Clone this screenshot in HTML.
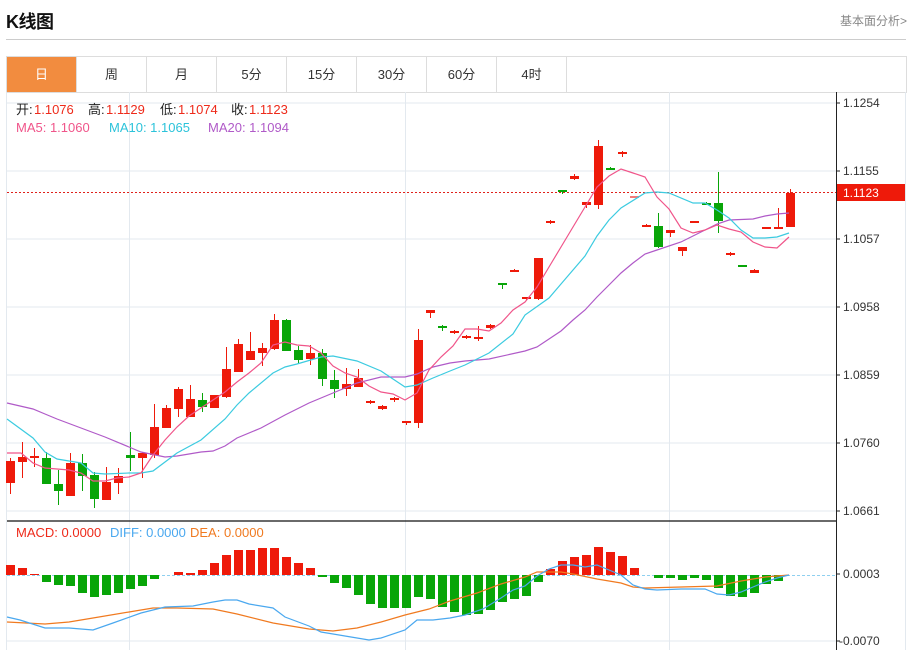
<!DOCTYPE html>
<html><head><meta charset="utf-8">
<style>
html,body{margin:0;padding:0;background:#fff;width:911px;height:650px;overflow:hidden;font-family:"Liberation Sans","Noto Sans CJK SC",sans-serif;}
.title{position:absolute;left:6px;top:8px;font-size:18px;font-weight:bold;color:#111;letter-spacing:-0.5px}
.more{position:absolute;right:4px;top:12px;font-size:12px;color:#888}
.sep{position:absolute;left:6px;top:39px;width:900px;height:1px;background:#ccc}
.tabs{position:absolute;left:6px;top:56px;width:899px;height:35px;border:1px solid #ddd;display:flex}
.tab{width:69px;height:35px;border-right:1px solid #ddd;text-align:center;line-height:35px;font-size:13px;color:#333}
.tab.on{background:#f28c3f;color:#fff}
svg{position:absolute;left:0;top:0}
</style></head><body>
<div class="title">K线图</div>
<div class="more">基本面分析&gt;</div>
<div class="sep"></div>
<div class="tabs"><div class="tab on">日</div><div class="tab">周</div><div class="tab">月</div><div class="tab">5分</div><div class="tab">15分</div><div class="tab">30分</div><div class="tab">60分</div><div class="tab">4时</div></div>
<svg id="s" width="911" height="650" xmlns="http://www.w3.org/2000/svg" font-family="Liberation Sans, Noto Sans CJK SC, sans-serif">
<g stroke="#e3e9ef" stroke-width="1">
<line x1="7" y1="103" x2="836" y2="103"/><line x1="7" y1="171" x2="836" y2="171"/><line x1="7" y1="239" x2="836" y2="239"/><line x1="7" y1="307" x2="836" y2="307"/><line x1="7" y1="375" x2="836" y2="375"/><line x1="7" y1="443" x2="836" y2="443"/><line x1="7" y1="511" x2="836" y2="511"/><line x1="7" y1="641" x2="836" y2="641"/>
<line x1="129.5" y1="92" x2="129.5" y2="650"/><line x1="405.5" y1="92" x2="405.5" y2="650"/><line x1="669.5" y1="92" x2="669.5" y2="650"/>
<line x1="6.5" y1="92" x2="6.5" y2="650"/><line x1="905.5" y1="92" x2="905.5" y2="650"/>
</g>
<line x1="7" y1="521" x2="836" y2="521" stroke="#111" stroke-width="1.2"/>
<line x1="836.5" y1="92" x2="836.5" y2="650" stroke="#222" stroke-width="1"/>
<g stroke="#222"><line x1="836" y1="103" x2="840" y2="103"/><line x1="836" y1="171" x2="840" y2="171"/><line x1="836" y1="239" x2="840" y2="239"/><line x1="836" y1="307" x2="840" y2="307"/><line x1="836" y1="375" x2="840" y2="375"/><line x1="836" y1="443" x2="840" y2="443"/><line x1="836" y1="511" x2="840" y2="511"/><line x1="836" y1="574" x2="840" y2="574"/><line x1="836" y1="641" x2="840" y2="641"/></g>
<g font-size="12" fill="#333">
<text x="843" y="107">1.1254</text><text x="843" y="175">1.1155</text><text x="843" y="243">1.1057</text><text x="843" y="311">1.0958</text><text x="843" y="379">1.0859</text><text x="843" y="447">1.0760</text><text x="843" y="515">1.0661</text><text x="843" y="578">0.0003</text><text x="839" y="645">-0.0070</text>
</g>
<line x1="7" y1="192.5" x2="836" y2="192.5" stroke="#e0201a" stroke-dasharray="2,2"/>
<line x1="7" y1="575.5" x2="836" y2="575.5" stroke="#8fd0f0" stroke-dasharray="3,2"/>
<rect x="837" y="184" width="68" height="17" fill="#ee1a0a"/>
<text x="843" y="197" font-size="12" fill="#fff">1.1123</text>
<g font-size="13">
<text x="16" y="114" fill="#222">开:</text><text x="34" y="114" fill="#ee2a1a">1.1076</text>
<text x="88" y="114" fill="#222">高:</text><text x="106" y="114" fill="#ee2a1a">1.1129</text>
<text x="160" y="114" fill="#222">低:</text><text x="178" y="114" fill="#ee2a1a">1.1074</text>
<text x="231" y="114" fill="#222">收:</text><text x="249" y="114" fill="#ee2a1a">1.1123</text>
<text x="16" y="132" fill="#f0558a">MA5: 1.1060</text>
<text x="109" y="132" fill="#2cc3da">MA10: 1.1065</text>
<text x="208" y="132" fill="#b05ac8">MA20: 1.1094</text>
<text x="16" y="537" fill="#ee2a1a">MACD: 0.0000</text>
<text x="110" y="537" fill="#4aa8ef">DIFF: 0.0000</text>
<text x="190" y="537" fill="#f07a20">DEA: 0.0000</text>
</g>
<g id="bars"></g><g id="cand"></g><g id="lines"></g>
</svg>
<script>
var R="#ee1a0a",G="#08a508";
var c=[[461,483,458,494,R],[457,462,442,478,R],[456,458,448,467,R],[458,484,452,484,G],[484,491,470,505,G],[463,496,453,496,R],[463,476,454,491,G],[475,499,472,508,G],[482,500,467,500,R],[476,483,468,494,R],[455,458,432,471,G],[453,458,452,478,R],[427,455,404,458,R],[408,428,405,428,R],[389,409,387,417,R],[399,417,385,417,R],[400,407,393,412,G],[395,408,395,408,R],[369,397,347,398,R],[344,372,339,372,R],[351,360,332,360,R],[348,353,343,366,R],[320,349,314,350,R],[320,351,319,351,G],[350,360,346,363,G],[353,359,345,365,R],[353,379,349,386,G],[380,389,370,398,G],[384,389,368,396,R],[378,387,369,387,R],[401,403,400,404,R],[406,409,405,410,R],[398,400,397,402,R],[421,423,421,425,R],[340,423,329,428,R],[310,313,310,318,R],[326,328,325,331,G],[331,333,330,334,R],[336,338,335,339,R],[337,339,326,341,R],[325,328,324,329,R],[283,284,283,289,G],[270,272,269,272,R],[297,299,297,300,R],[258,299,258,300,R],[221,223,220,224,R],[190,191,190,194,G],[176,179,174,180,R],[202,205,202,208,R],[146,205,140,209,R],[168,169,167,170,G],[152,154,151,157,R],[196,197,196,197,"#f37a7a"],[225,227,224,227,R],[226,247,213,248,G],[230,233,230,237,R],[247,251,247,256,R],[221,223,221,223,R],[203,204,202,205,G],[203,221,172,233,G],[253,255,252,256,R],[265,266,265,266,G],[270,273,269,273,R],[227,229,227,229,R],[227,229,208,229,R],[193,227,189,227,R]];
var h="";
c.forEach(function(d,i){var x=10+i*12;h+='<line x1="'+(x+.5)+'" y1="'+d[2]+'" x2="'+(x+.5)+'" y2="'+d[3]+'" stroke="'+d[4]+'" stroke-width="1"/>';h+='<rect x="'+(x-4)+'" y="'+d[0]+'" width="9" height="'+Math.max(2,d[1]-d[0])+'" fill="'+d[4]+'"/>';});
document.getElementById("cand").innerHTML=h;
var m=[565,568,574,582,585,586,593,597,595,593,589,586,579,575,572,573,570,563,555,550,550,548,548,557,563,568,577,583,588,595,604,608,608,608,597,599,607,612,615,614,610,602,599,596,582,569,561,557,555,547,552,556,568,575,578,578,580,578,580,588,596,597,593,584,581,575];
h="";m.forEach(function(v,i){var x=10+i*12;if(v<575)h+='<rect x="'+(x-4)+'" y="'+v+'" width="9" height="'+(575-v)+'" fill="'+R+'"/>';else if(v>575)h+='<rect x="'+(x-4)+'" y="575" width="9" height="'+(v-575)+'" fill="'+G+'"/>';});
document.getElementById("bars").innerHTML=h;
function pl(p,col){return '<polyline fill="none" stroke="'+col+'" stroke-width="1.2" points="'+p+'"/>';}
var ma5="7,453 21,453 33,463 45,468 57,469 69,470 81,473 93,481 105,481 117,478 129,477 141,473 153,455 165,440 177,427 189,416 201,408 213,400 225,392 237,382 249,373 261,363 273,345 285,342 297,345 309,346 321,353 333,366 345,373 357,377 369,386 381,392 393,394 405,400 417,393 429,370 441,357 453,346 465,329 477,329 489,331 501,323 513,310 525,302 537,287 549,267 561,247 573,227 585,207 597,187 609,176 621,169 633,173 645,177 657,197 669,209 681,228 693,233 705,230 717,225 729,229 741,232 753,242 765,247 777,248 789,237";
var ma10="7,419 33,438 45,452 57,459 81,463 93,473 105,474 129,473 141,473 153,471 177,453 201,440 225,419 237,405 249,393 273,373 285,367 297,364 321,357 333,356 357,361 381,371 405,387 417,385 433,378 450,371 465,365 489,353 513,334 525,315 549,298 561,284 585,256 597,236 609,220 621,208 645,193 657,192 669,193 693,203 705,203 717,210 729,218 741,230 753,238 765,238 777,237 789,233";
var ma20="7,403 33,409 45,414 57,419 81,428 105,437 129,447 141,452 165,457 177,456 201,452 213,451 225,446 237,438 261,428 285,415 309,403 333,393 357,383 381,377 405,377 417,374 433,367 450,363 465,361 489,359 525,351 537,347 549,339 561,331 573,320 585,310 597,297 609,285 621,273 633,263 645,254 657,250 681,242 693,236 705,230 717,224 729,220 753,219 765,216 777,214 789,213";
var dif="7,617 20,620 45,628 69,628 93,630 113,623 141,613 165,607 193,606 213,602 225,600 237,600 249,604 273,608 285,617 309,626 321,632 345,636 369,640 381,638 405,630 417,620 433,620 450,618 465,615 483,609 501,598 513,590 525,586 537,576 549,569 561,565 573,565 585,567 597,565 609,570 621,575 633,585 645,589 657,590 681,589 705,589 717,594 729,595 741,592 753,587 765,582 777,578 789,575";
var dea="7,622 45,624 69,622 93,618 129,612 153,608 177,608 213,609 237,614 273,623 309,629 333,631 357,628 381,622 405,615 429,609 450,601 477,593 501,584 525,577 537,572 549,572 561,572 573,574 597,579 621,583 633,587 645,588 717,586 741,581 765,577 789,575";
document.getElementById("lines").innerHTML=pl(ma20,"#b05ac8")+pl(ma10,"#3ccbe0")+pl(ma5,"#f0558a")+pl(dea,"#f07a20")+pl(dif,"#4aa8ef");
</script>
</body></html>
